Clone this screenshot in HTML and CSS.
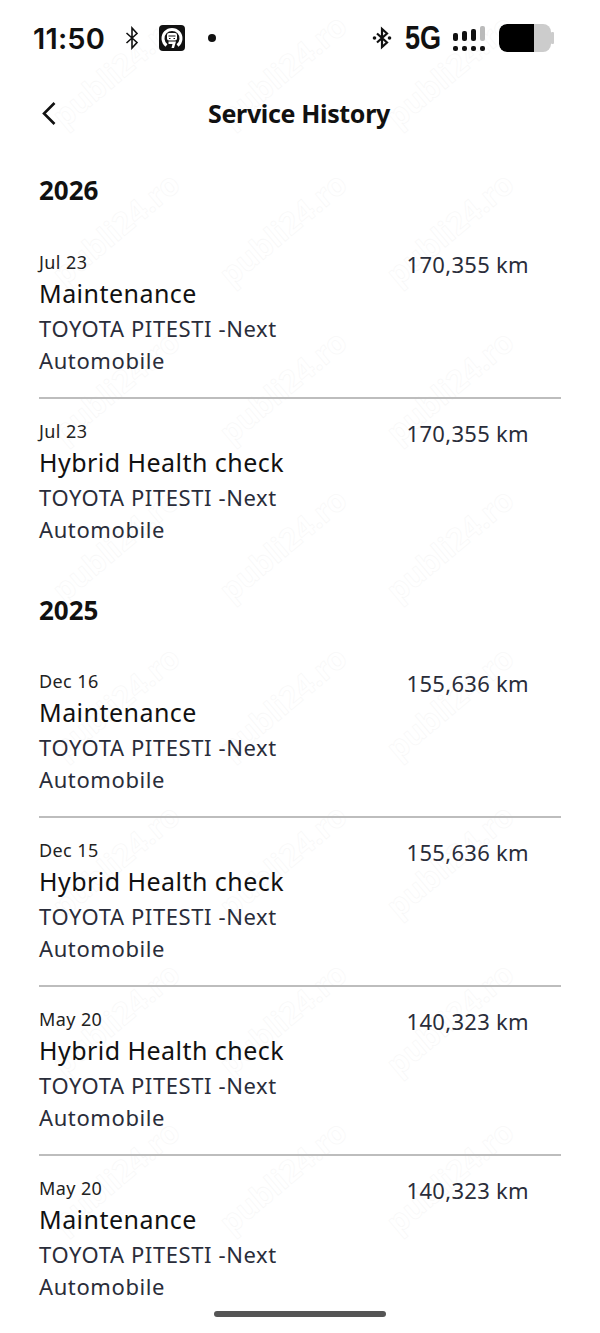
FILE: index.html
```html
<!DOCTYPE html>
<html lang="en">
<head>
  <meta charset="UTF-8" />
  <meta name="viewport" content="width=device-width, initial-scale=1.0" />
  <title>Service History</title>
  <link rel="stylesheet" href="styles.css">
</head>
<body>
  <!-- listing site watermark, behind the page content -->
  <div class="watermark" aria-hidden="true">
    <span>publi24.ro</span><span>publi24.ro</span><span>publi24.ro</span>
    <span>publi24.ro</span><span>publi24.ro</span><span>publi24.ro</span>
    <span>publi24.ro</span><span>publi24.ro</span><span>publi24.ro</span>
    <span>publi24.ro</span><span>publi24.ro</span><span>publi24.ro</span>
    <span>publi24.ro</span><span>publi24.ro</span><span>publi24.ro</span>
    <span>publi24.ro</span><span>publi24.ro</span><span>publi24.ro</span>
    <span>publi24.ro</span><span>publi24.ro</span><span>publi24.ro</span>
    <span>publi24.ro</span><span>publi24.ro</span><span>publi24.ro</span>
  </div>

  <div class="status">
    <div class="status-left">
      <span class="time">11:50</span>
      <svg class="bt" width="14" height="24" viewBox="0 0 14 24"><path d="M1.500 7 L12 16.500 L7 22 V2 L12 7.500 L1.500 17" fill="none" stroke="#111" stroke-width="1.600"/></svg>
      <svg class="app" width="26" height="26" viewBox="0 0 26 26">
        <rect width="26" height="26" rx="4" fill="#111"/>
        <path d="M7.500 20.500 A9 9 0 1 1 18.500 20.500" fill="none" stroke="#fff" stroke-width="3"/>
        <rect x="8" y="8" width="10" height="7.500" rx="2" fill="#fff"/>
        <path d="M9.500 11 h7 M10 13.500 h1.500 M14.500 13.500 h1.500" stroke="#111" stroke-width="1"/>
        <path d="M9.500 16.500 h7.500 l-2 6.500 h-2.500 l1 -4 h-4 z" fill="#fff"/>
      </svg>
      <span class="dot"></span>
    </div>
    <div class="status-right">
      <svg class="bt-on" width="20" height="24" viewBox="0 0 20 24"><path d="M5 7.500 L15 16.500 L10 21 V3 L15 7.500 L5 16.500" fill="none" stroke="#111" stroke-width="2.200"/><circle cx="2.500" cy="12" r="1.800" fill="#111"/><circle cx="17.500" cy="12" r="1.800" fill="#111"/></svg>
      <span class="net">5G</span>
      <div class="signal">
        <div class="sig-col"><i class="h1"></i><b></b></div>
        <div class="sig-col"><i class="h2"></i><b></b></div>
        <div class="sig-col"><i class="h3"></i><b></b></div>
        <div class="sig-col off"><i class="h4"></i><b></b></div>
      </div>
      <div class="battery">
        <div class="bat-body"><div class="bat-fill"></div></div>
        <div class="bat-tip"></div>
      </div>
    </div>
  </div>

  <div class="nav">
    <svg class="back" width="16" height="26" viewBox="0 0 16 26"><path d="M13.500 3 L3 13.500 L13.500 24" fill="none" stroke="#111" stroke-width="2.600"/></svg>
    <h1>Service History</h1>
  </div>

  <div class="content">
    <h2>2026</h2>
    <div class="item">
      <div class="info">
        <div class="date">Jul 23</div>
        <div class="name">Maintenance</div>
        <div class="dealer">TOYOTA PITESTI -Next<br>Automobile</div>
      </div>
      <div class="km">170,355 km</div>
    </div>
    <div class="item last">
      <div class="info">
        <div class="date">Jul 23</div>
        <div class="name">Hybrid Health check</div>
        <div class="dealer">TOYOTA PITESTI -Next<br>Automobile</div>
      </div>
      <div class="km">170,355 km</div>
    </div>

    <h2 class="later">2025</h2>
    <div class="item">
      <div class="info">
        <div class="date">Dec 16</div>
        <div class="name">Maintenance</div>
        <div class="dealer">TOYOTA PITESTI -Next<br>Automobile</div>
      </div>
      <div class="km">155,636 km</div>
    </div>
    <div class="item">
      <div class="info">
        <div class="date">Dec 15</div>
        <div class="name">Hybrid Health check</div>
        <div class="dealer">TOYOTA PITESTI -Next<br>Automobile</div>
      </div>
      <div class="km">155,636 km</div>
    </div>
    <div class="item">
      <div class="info">
        <div class="date">May 20</div>
        <div class="name">Hybrid Health check</div>
        <div class="dealer">TOYOTA PITESTI -Next<br>Automobile</div>
      </div>
      <div class="km">140,323 km</div>
    </div>
    <div class="item last">
      <div class="info">
        <div class="date">May 20</div>
        <div class="name">Maintenance</div>
        <div class="dealer">TOYOTA PITESTI -Next<br>Automobile</div>
      </div>
      <div class="km">140,323 km</div>
    </div>
  </div>

  <div class="home-area"><div class="home-bar"></div></div>
</body>
</html>
```

FILE: styles.css
```css
* { box-sizing: border-box; }
html, body { margin: 0; height: 1333px; overflow: hidden; }
body { background: #fff; color: #111; font-family: "Noto Sans", sans-serif; display: flex; flex-direction: column; position: relative; }
.status, .nav, .content, .home-area { position: relative; }

.status { height: 76px; flex: none; display: flex; justify-content: space-between; align-items: center; padding: 0 46px 0 33px; }
.status-left, .status-right { display: flex; align-items: center; }
.time { font-family: "Inter", sans-serif; font-size: 29px; font-weight: 600; letter-spacing: 0.2px; }
.bt { margin-left: 20px; }
.app { margin-left: 20px; }
.dot { width: 8px; height: 8px; border-radius: 50%; background: #111; margin-left: 23px; }
.net { display: inline-block; width: 36px; font-family: "Liberation Sans", sans-serif; font-size: 33px; font-weight: 700; margin-left: 13px; transform: scaleX(0.82); transform-origin: left center; }
.signal { display: flex; gap: 4px; margin-left: 12px; align-items: flex-end; }
.sig-col { width: 5px; display: flex; flex-direction: column; align-items: stretch; gap: 5px; }
.sig-col i { display: block; background: #111; border-radius: 2px; }
.sig-col b { display: block; height: 5px; background: #111; border-radius: 2px; }
.sig-col.off i { background: #bbb; }
.h1 { height: 8px; }
.h2 { height: 10px; }
.h3 { height: 12px; }
.h4 { height: 15px; }
.battery { display: flex; align-items: center; margin-left: 14px; }
.bat-body { width: 52px; height: 28px; border-radius: 8px; background: #ccc; overflow: hidden; }
.bat-fill { width: 35px; height: 100%; background: #000; border-radius: 8px 0 0 8px; }
.bat-tip { width: 3px; height: 12px; background: #ccc; border-radius: 1px; }

.nav { height: 74px; flex: none; display: flex; align-items: center; justify-content: center; }
.back { position: absolute; left: 41px; top: 24px; }
.nav h1 { margin: 0; padding-right: 2px; font-size: 25px; font-weight: 700; letter-spacing: -0.35px; color: #111; }

.content { height: 1146px; flex: none; overflow: hidden; padding: 0 39px; }
h2 { margin: 0; font-size: 26px; line-height: 32px; font-weight: 700; padding-top: 24px; padding-bottom: 24px; }
h2.later { padding-top: 26px; padding-bottom: 23px; }

.item { display: flex; justify-content: space-between; align-items: flex-start; height: 169px; padding-top: 20px; padding-right: 32px; border-bottom: 2px solid #bdbdbd; }
.item.last { border-bottom: 0; }
.date { font-size: 18px; line-height: 24px; letter-spacing: 0.4px; color: #222; }
.name { font-size: 25px; line-height: 34px; letter-spacing: 0.46px; margin-top: 2px; color: #111; }
.dealer { font-size: 22px; line-height: 32px; letter-spacing: 0.6px; color: #2a2d3a; margin-top: 2px; }
.km { font-size: 22px; line-height: 32px; letter-spacing: 0.3px; color: #2a2d3a; margin-top: -2px; }

.home-area { height: 37px; flex: none; display: flex; justify-content: center; padding-top: 15px; }
.home-bar { width: 172px; height: 6px; border-radius: 3px; background: #555; }

.watermark { position: absolute; left: 32px; top: -9px; display: grid; grid-template-columns: repeat(3, 167px); grid-auto-rows: 158px; pointer-events: none; }
.watermark span { display: flex; align-items: center; justify-content: center; font-size: 31px; font-weight: 700; color: transparent; -webkit-text-stroke: 0.5px #f6f6f6; transform: rotate(-40deg); }
```
